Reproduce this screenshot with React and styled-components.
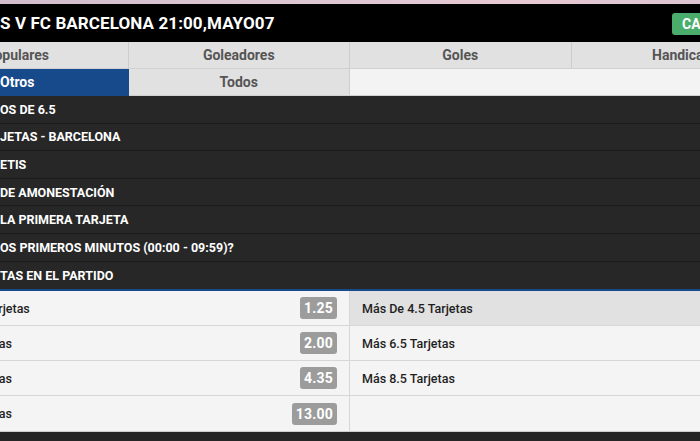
import React from "react";
import styled, { createGlobalStyle } from "styled-components";

const GlobalStyle = createGlobalStyle`
  html, body {
    margin: 0;
    padding: 0;
    background: #262626;
    overflow: hidden;
  }
  body {
    font-family: Roboto, "Liberation Sans", Arial, sans-serif;
  }
`;

//the screenshot shows the board shifted off the left edge
const Page = styled.div`
  width: 700px;
  height: 441px;
  overflow: hidden;
  background: #262626;
`;

const Board = styled.div`
  width: 886px;
  margin-left: -93px;
`;

const Backdrop = styled.div`
  height: 4px;
  background: linear-gradient(90deg, #cdb9c9 0%, #dcc7d2 40%, #e6c9d3 70%, #d7c3d1 100%);
`;

const Header = styled.div`
  height: 38px;
  background: #000;
  display: flex;
  align-items: center;
  justify-content: space-between;
  padding: 0 10px 0 93px;
`;

const Title = styled.h1`
  margin: 0;
  color: #fff;
  font-size: 17px;
  font-weight: 700;
  letter-spacing: 0.1px;
`;

const GreenButton = styled.button`
  width: 111px;
  height: 22px;
  margin-top: 1px;
  border: none;
  border-radius: 3px;
  background: #4aad6c;
  color: #fff;
  font-family: inherit;
  font-size: 14px;
  font-weight: 700;
  text-align: left;
  padding: 0 0 0 10px;
`;

const TabGrid = styled.div`
  display: grid;
  grid-template-columns: repeat(4, 1fr);
  grid-auto-rows: 27px;
  background: #f3f3f3;
`;

const Tab = styled.div`
  display: flex;
  align-items: center;
  justify-content: center;
  font-size: 14px;
  font-weight: 700;
  color: ${(p) => (p.$active ? "#fff" : "#555")};
  background: ${(p) => (p.$active ? "#174a8b" : "#e1e1e1")};
  border-right: 1px solid ${(p) => (p.$active ? "#174a8b" : "#cdcdcd")};
  border-bottom: 1px solid ${(p) => (p.$active ? "#174a8b" : "#d0d0d0")};
`;

const TabFiller = styled.div`
  grid-column: span 2;
  background: #f3f3f3;
  border-bottom: 1px solid #d0d0d0;
`;

const MarketList = styled.ul`
  list-style: none;
  margin: 0;
  padding: 0;
  background: #272727;
  border-bottom: 2px solid #174a8b;
`;

const Market = styled.li`
  box-sizing: border-box;
  height: 27.6px;
  display: flex;
  align-items: center;
  padding-left: 93px;
  color: #fff;
  font-size: 12.5px;
  font-weight: 700;
  border-bottom: 1px solid #1c1c1c;
  &:last-child {
    border-bottom: none;
  }
`;

const OddsGrid = styled.div`
  display: grid;
  grid-template-columns: 1fr 1fr;
  grid-auto-rows: 35px;
  background: #f4f4f4;
  border-bottom: 1px solid #cfcfcf;
`;

const Selection = styled.div`
  display: flex;
  align-items: center;
  justify-content: space-between;
  padding: 0 12px;
  background: ${(p) => (p.$selected ? "#e1e1e1" : "#f4f4f4")};
  border-bottom: 1px solid #d7d7d7;
  border-right: 1px solid #d7d7d7;
  &:last-child,
  &:nth-last-child(2) {
    border-bottom: none;
  }
`;

const Label = styled.span`
  color: #1e1e1e;
  font-size: 12.5px;
  font-weight: 500;
`;

const Price = styled.span`
  display: inline-flex;
  align-items: center;
  height: 22px;
  padding: 0 4px;
  border-radius: 3px;
  background: #9c9c9c;
  color: #fff;
  font-size: 14px;
  font-weight: 700;
  letter-spacing: 0.2px;
`;

const markets = [
  "OS DE 6.5",
  "JETAS - BARCELONA",
  "ETIS",
  "DE AMONESTACIÓN",
  "LA PRIMERA TARJETA",
  "OS PRIMEROS MINUTOS (00:00 - 09:59)?",
  "TAS EN EL PARTIDO",
];

const rows = [
  [{ label: "Más De 3.5 Tarjetas", price: "1.25" }, { label: "Más De 4.5 Tarjetas", selected: true }],
  [{ label: "Más 5.5 Tarjetas", price: "2.00" }, { label: "Más 6.5 Tarjetas" }],
  [{ label: "Más 7.5 Tarjetas", price: "4.35" }, { label: "Más 8.5 Tarjetas" }],
  [{ label: "Más 9.5 Tarjetas", price: "13.00" }, { label: "" }],
];

export default function App() {
  return (
    <Page>
      <GlobalStyle />
      <Board>
        <Backdrop />
        <Header>
          <Title>S V FC BARCELONA 21:00,MAYO07</Title>
          <GreenButton>CASH OUT</GreenButton>
        </Header>
        <TabGrid>
          <Tab>Populares</Tab>
          <Tab>Goleadores</Tab>
          <Tab>Goles</Tab>
          <Tab>Handicap</Tab>
          <Tab $active>Otros</Tab>
          <Tab>Todos</Tab>
          <TabFiller />
        </TabGrid>
        <MarketList>
          {markets.map((m) => (
            <Market key={m}>{m}</Market>
          ))}
        </MarketList>
        <OddsGrid>
          {rows.flat().map((s, i) => (
            <Selection key={i} $selected={s.selected}>
              <Label>{s.label}</Label>
              {s.price ? <Price>{s.price}</Price> : null}
            </Selection>
          ))}
        </OddsGrid>
      </Board>
    </Page>
  );
}
